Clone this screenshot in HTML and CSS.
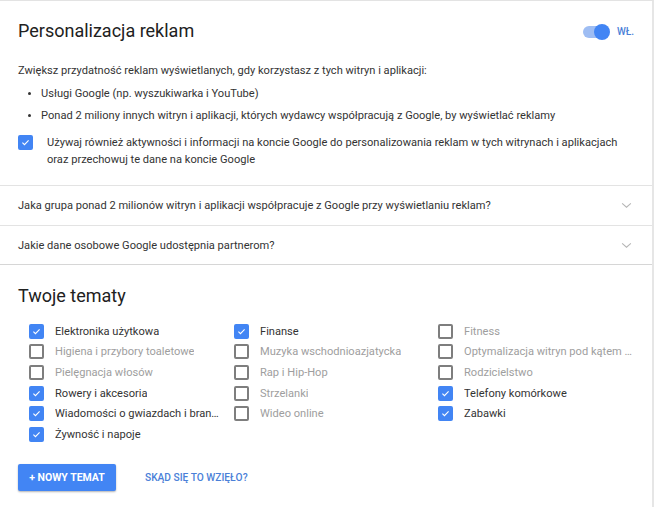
FILE: index.html
```html
<!DOCTYPE html>
<html lang="pl">
<head>
<meta charset="utf-8">
<title>Personalizacja reklam</title>
<link rel="stylesheet" href="styles.css">
</head>
<body>
<div class="card">
  <section class="intro">
    <header class="head">
      <h1 class="title">Personalizacja reklam</h1>
      <div class="toggle-wrap">
        <span class="toggle"><span class="knob"></span></span>
        <span class="toggle-label">WŁ.</span>
      </div>
    </header>
    <p class="desc">Zwiększ przydatność reklam wyświetlanych, gdy korzystasz z tych witryn i aplikacji:</p>
    <ul class="bullets">
      <li>Usługi Google (np. wyszukiwarka i YouTube)</li>
      <li>Ponad 2 miliony innych witryn i aplikacji, których wydawcy współpracują z Google, by wyświetlać reklamy</li>
    </ul>
    <div class="consent">
      <span class="cb checked"><svg viewBox="0 0 16 16"><path d="M3.5 8.2l3 3 6-6.2" fill="none" stroke="#fff" stroke-width="1.6"/></svg></span>
      <p class="consent-text">Używaj również aktywności i informacji na koncie Google do personalizowania reklam w tych witrynach i aplikacjach oraz przechowuj te dane na koncie Google</p>
    </div>
  </section>
  <div class="faq">
    <span>Jaka grupa ponad 2 milionów witryn i aplikacji współpracuje z Google przy wyświetlaniu reklam?</span>
    <svg class="chev" viewBox="0 0 12 8"><path d="M1 1.5l5 4.5 5-4.5" fill="none" stroke="#b5b5b5" stroke-width="1.2"/></svg>
  </div>
  <div class="faq last">
    <span>Jakie dane osobowe Google udostępnia partnerom?</span>
    <svg class="chev" viewBox="0 0 12 8"><path d="M1 1.5l5 4.5 5-4.5" fill="none" stroke="#b5b5b5" stroke-width="1.2"/></svg>
  </div>
  <section class="topics">
    <h2 class="title">Twoje tematy</h2>
    <div class="grid">
      <div class="col">
        <div class="item on"><span class="cb checked"><svg viewBox="0 0 16 16"><path d="M3.5 8.2l3 3 6-6.2" fill="none" stroke="#fff" stroke-width="1.6"/></svg></span><span class="lbl">Elektronika użytkowa</span></div>
        <div class="item"><span class="cb"></span><span class="lbl">Higiena i przybory toaletowe</span></div>
        <div class="item"><span class="cb"></span><span class="lbl">Pielęgnacja włosów</span></div>
        <div class="item on"><span class="cb checked"><svg viewBox="0 0 16 16"><path d="M3.5 8.2l3 3 6-6.2" fill="none" stroke="#fff" stroke-width="1.6"/></svg></span><span class="lbl">Rowery i akcesoria</span></div>
        <div class="item on"><span class="cb checked"><svg viewBox="0 0 16 16"><path d="M3.5 8.2l3 3 6-6.2" fill="none" stroke="#fff" stroke-width="1.6"/></svg></span><span class="lbl">Wiadomości o gwiazdach i branży rozrywkowej</span></div>
        <div class="item on"><span class="cb checked"><svg viewBox="0 0 16 16"><path d="M3.5 8.2l3 3 6-6.2" fill="none" stroke="#fff" stroke-width="1.6"/></svg></span><span class="lbl">Żywność i napoje</span></div>
      </div>
      <div class="col">
        <div class="item on"><span class="cb checked"><svg viewBox="0 0 16 16"><path d="M3.5 8.2l3 3 6-6.2" fill="none" stroke="#fff" stroke-width="1.6"/></svg></span><span class="lbl">Finanse</span></div>
        <div class="item"><span class="cb"></span><span class="lbl">Muzyka wschodnioazjatycka</span></div>
        <div class="item"><span class="cb"></span><span class="lbl">Rap i Hip-Hop</span></div>
        <div class="item"><span class="cb"></span><span class="lbl">Strzelanki</span></div>
        <div class="item"><span class="cb"></span><span class="lbl">Wideo online</span></div>
      </div>
      <div class="col">
        <div class="item"><span class="cb"></span><span class="lbl">Fitness</span></div>
        <div class="item"><span class="cb"></span><span class="lbl">Optymalizacja witryn pod kątem wyszukiwarek</span></div>
        <div class="item"><span class="cb"></span><span class="lbl">Rodzicielstwo</span></div>
        <div class="item on"><span class="cb checked"><svg viewBox="0 0 16 16"><path d="M3.5 8.2l3 3 6-6.2" fill="none" stroke="#fff" stroke-width="1.6"/></svg></span><span class="lbl">Telefony komórkowe</span></div>
        <div class="item on"><span class="cb checked"><svg viewBox="0 0 16 16"><path d="M3.5 8.2l3 3 6-6.2" fill="none" stroke="#fff" stroke-width="1.6"/></svg></span><span class="lbl">Zabawki</span></div>
      </div>
    </div>
    <div class="actions">
      <button class="btn">+ NOWY TEMAT</button>
      <a class="link" href="#">SKĄD SIĘ TO WZIĘŁO?</a>
    </div>
  </section>
</div>
</body>
</html>
```

FILE: styles.css
```css
* { box-sizing: border-box; }
html, body { margin: 0; padding: 0; background: #fff; }
body {
  font-family: Roboto, "Liberation Sans", Arial, sans-serif;
  color: #333;
  width: 655px;
  height: 507px;
  overflow: hidden;
}
.card {
  width: 654px;
  height: 507px;
  border-top: 1px solid #e3e3e3;
  border-right: 2px solid #e6e6e6;
}
.intro { padding: 18px 18px 17px 18px; border-bottom: 1px solid #e3e3e3; }
.head { display: flex; align-items: center; justify-content: space-between; height: 24px; }
.title { margin: 0; font-size: 18px; font-weight: 400; line-height: 24px; color: #212121; }
.toggle-wrap { display: flex; align-items: center; gap: 8px; }
.toggle {
  position: relative;
  width: 24px; height: 12px;
  border-radius: 6px;
  background: #9ebdf3;
  margin-top: 2px;
}
.knob {
  position: absolute;
  right: -3px; top: -2px;
  width: 16px; height: 16px;
  border-radius: 50%;
  background: #4285f4;
}
.toggle-label { font-size: 10px; color: #4a7fd8; font-weight: 500; margin-left: 2px; }
.desc { margin: 20px 0 0 0; font-size: 11.1px; line-height: 16px; color: #333; }
.bullets { margin: 7px 0 0 0; padding: 0 0 0 23px; font-size: 11.1px; line-height: 16px; }
.bullets li { margin-bottom: 6px; }
.bullets li + li { margin-bottom: 10px; }
.bullets li::marker { font-size: 10px; }
.consent { display: flex; gap: 14px; margin-top: 0; }
.consent .cb { margin-top: 1px; }
.consent-text { margin: 0; font-size: 11.1px; line-height: 17px; color: #333; max-width: 590px; }
.cb {
  flex: none;
  width: 15px; height: 15px;
  border: 2px solid #7e7e7e;
  border-radius: 2px;
  display: inline-flex;
  align-items: center;
  justify-content: center;
}
.cb.checked { background: #4285f4; border-color: #4285f4; }
.cb svg { width: 13px; height: 13px; display: block; }
.faq {
  height: 40px;
  display: flex;
  align-items: center;
  justify-content: space-between;
  padding: 0 20px 0 18px;
  border-bottom: 1px solid #e3e3e3;
  font-size: 11.1px;
  color: #333;
}
.faq.last { height: 39px; border-bottom-color: #d6d6d6; }
.chev { width: 11px; height: 7px; }
.topics { padding: 19px 18px 0 18px; }
.grid { display: grid; grid-template-columns: 205px 204px 200px; margin: 13px 0 0 11px; }
.item { display: flex; align-items: center; height: 20.6px; gap: 11px; }
.lbl {
  font-size: 11.1px;
  color: #9e9e9e;
  max-width: 168px;
  white-space: nowrap;
  overflow: hidden;
  text-overflow: ellipsis;
}
.item.on .lbl { color: #333; }
.actions { display: flex; align-items: center; gap: 29px; margin-top: 19px; }
.btn {
  height: 27px;
  width: 98px;
  border: none;
  border-radius: 2px;
  background: #4285f4;
  color: #fff;
  font-family: Roboto, "Liberation Sans", Arial, sans-serif;
  font-size: 10.5px;
  font-weight: 700;
  padding: 0;
  box-shadow: 0 1px 2px rgba(0,0,0,0.3);
}
.link { color: #4a7fd8; font-size: 10.2px; font-weight: 500; text-decoration: none; }
```
